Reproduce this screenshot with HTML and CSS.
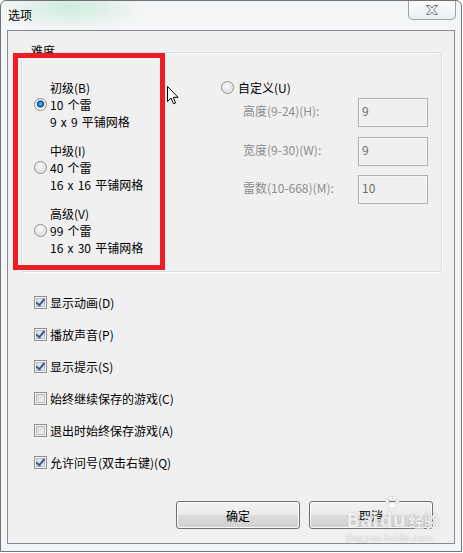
FILE: index.html
```html
<!DOCTYPE html>
<html lang="zh-CN">

<head>
    <meta charset="UTF-8">
    <meta name="viewport" content="width=device-width, initial-scale=1.0">
    <title>选项</title>
    <link rel="stylesheet" href="styles.css">
</head>

<body>
    <div class="window">
        <div class="titlebar">
            <span class="title">选项</span>
            <button class="close" type="button">
                <svg width="12" height="10" viewBox="0 0 12 10">
                    <path d="M0.5,0.5 H3.8 L6,3.2 L8.2,0.5 H11.5 L7.7,5 L11.5,9.5 H8.2 L6,6.8 L3.8,9.5 H0.5 L4.3,5 Z" fill="#f7f8f9" stroke="#72777d" stroke-width="1" stroke-linejoin="round" />
                </svg>
            </button>
        </div>

        <div class="client">
            <div class="group">
                <span class="legend">难度</span>
                <div class="mark"></div>

                <div class="levels">
                    <label class="level">
                        <span class="radio checked"></span>
                        <span>初级(B)<br>10 个雷<br>9 x 9 平铺网格</span>
                    </label>
                    <label class="level">
                        <span class="radio"></span>
                        <span>中级(I)<br>40 个雷<br>16 x 16 平铺网格</span>
                    </label>
                    <label class="level">
                        <span class="radio"></span>
                        <span>高级(V)<br>99 个雷<br>16 x 30 平铺网格</span>
                    </label>
                </div>

                <div class="custom">
                    <label class="custom-head"><span class="radio"></span>自定义(U)</label>
                    <div class="fields">
                        <span class="field-label">高度(9-24)(H):</span>
                        <span class="field">9</span>
                        <span class="field-label">宽度(9-30)(W):</span>
                        <span class="field">9</span>
                        <span class="field-label">雷数(10-668)(M):</span>
                        <span class="field">10</span>
                    </div>
                </div>
            </div>

            <ul class="options">
                <li class="option"><span class="check checked"></span>显示动画(D)</li>
                <li class="option"><span class="check checked"></span>播放声音(P)</li>
                <li class="option"><span class="check checked"></span>显示提示(S)</li>
                <li class="option"><span class="check"></span>始终继续保存的游戏(C)</li>
                <li class="option"><span class="check"></span>退出时始终保存游戏(A)</li>
                <li class="option"><span class="check checked"></span>允许问号(双击右键)(Q)</li>
            </ul>

            <div class="buttons">
                <button class="btn" type="button">确定</button>
                <button class="btn" type="button">取消</button>
            </div>
        </div>
    </div>

    <!-- mouse pointer left in the screenshot -->
    <svg class="cursor" width="13" height="19" viewBox="0 0 13 19">
        <path d="M0.5,0.5 V15.5 L4,12 L6.5,17.8 L8.6,16.9 L6.2,11.3 H11 Z" fill="#fff" stroke="#000" stroke-width="1" stroke-linejoin="round" />
    </svg>

    <div class="watermark">
        <div class="wm-logo">
            <span>Bai</span>
            <span class="wm-du">
                <svg width="16" height="13" viewBox="0 0 16 13">
                    <circle cx="3" cy="5" r="2" />
                    <circle cx="6.5" cy="2" r="2" />
                    <circle cx="10.5" cy="2" r="2" />
                    <circle cx="13.5" cy="5" r="2" />
                    <ellipse cx="8.2" cy="9.5" rx="4" ry="3" />
                </svg>
                du
            </span>
            <span class="wm-cn">经验</span>
        </div>
        <div class="wm-url">jingyan.baidu.com</div>
    </div>
</body>

</html>
```

FILE: styles.css
```css
body {
    margin: 0;
    background: #fff;
    font-family: "Noto Sans CJK SC", "Microsoft YaHei", sans-serif;
    font-size: 12px;
    color: #000;
}

.window {
    position: relative;
    width: 462px;
    height: 552px;
    box-sizing: border-box;
    border: 1px solid #6f7378;
    border-radius: 6px 6px 0 0;
    background:
        radial-gradient(ellipse 70px 22px at 70px 6px, rgba(160, 225, 190, 0.45), transparent),
        #f3f5f6;
}

.titlebar {
    display: flex;
    justify-content: space-between;
    align-items: flex-start;
    height: 29px;
}

.title {
    padding: 5px 0 0 7px;
    line-height: 17px;
}

.close {
    display: flex;
    align-items: center;
    justify-content: center;
    width: 48px;
    height: 19px;
    margin-right: 5px;
    padding: 0;
    border: 1px solid #9ca2a8;
    border-top: none;
    border-radius: 0 0 5px 5px;
    background: linear-gradient(#fcfcfc, #eceef0);
}

.client {
    display: flex;
    flex-direction: column;
    width: 448px;
    height: 514px;
    margin: 0 6px;
    box-sizing: border-box;
    border: 1px solid #878b91;
    background: #f0f0f0;
}

/* 难度 group box */
.group {
    position: relative;
    display: grid;
    grid-template-columns: 187px 1fr;
    align-items: start;
    width: 421px;
    height: 220px;
    margin: 21px 0 0 13px;
    padding: 26px 0 0 12px;
    box-sizing: border-box;
    border: 1px solid #d5dfe5;
    border-radius: 3px;
    box-shadow: 1px 1px 0 #fff, inset 1px 1px 0 #fff;
}

.legend {
    position: absolute;
    left: 8px;
    top: -9px;
    padding: 0 1px;
    line-height: 14px;
    background: #f0f0f0;
}

.mark {
    position: absolute;
    left: -9px;
    top: 0;
    width: 152px;
    height: 217px;
    box-sizing: border-box;
    border: 5px solid #ee1c24;
}

.levels {
    display: flex;
    flex-direction: column;
    gap: 12px;
}

.level {
    display: grid;
    grid-template-columns: 13px auto;
    column-gap: 3px;
    line-height: 17px;
    word-spacing: 1.5px;
}

.level .radio {
    margin-top: 19px;
}

.radio {
    display: inline-block;
    flex: none;
    width: 13px;
    height: 13px;
    box-sizing: border-box;
    border: 1px solid #8c8c8c;
    border-radius: 50%;
    background: radial-gradient(circle at 45% 40%, #fdfdfd 0, #e6e6e6 45%, #c9c9c9 100%);
    box-shadow: inset 0 0 0 1px rgba(255, 255, 255, 0.6);
}

.radio.checked {
    background: radial-gradient(circle at 50% 45%, #7fd3fb 0, #2489d6 1.6px, #0d4d8c 3.2px, #d2d6da 3.8px, #f6f6f6 5.5px);
}

.custom {
    display: flex;
    flex-direction: column;
    gap: 2px;
}

.custom-head {
    display: flex;
    align-items: center;
    gap: 4px;
    line-height: 17px;
}

.fields {
    display: grid;
    grid-template-columns: 115px 70px;
    row-gap: 9.5px;
    padding-left: 22px;
    color: #8d8d8d;
}

.field-label {
    padding-top: 4px;
    line-height: 17px;
}

.field {
    height: 29px;
    padding: 3px 0 0 3px;
    box-sizing: border-box;
    border: 1px solid #aeb0b4;
    line-height: 17px;
    color: #6d6d6d;
    box-shadow: inset 0 0 0 1px #f7f7f7;
}

/* checkboxes */
.options {
    display: flex;
    flex-direction: column;
    gap: 15px;
    margin: 22px 0 0;
    padding: 0 0 0 26px;
    list-style: none;
}

.option {
    display: flex;
    align-items: center;
    gap: 3px;
    line-height: 17px;
}

.check {
    position: relative;
    flex: none;
    width: 13px;
    height: 13px;
    box-sizing: border-box;
    border: 1px solid #8e8f8f;
    background: linear-gradient(135deg, #d3d6da, #f7f7f7);
    box-shadow: inset 0 0 0 1px #f4f4f4, inset 0 0 0 2px #b9bdc3;
}

.check.checked::after {
    content: "";
    position: absolute;
    left: 3px;
    top: 0;
    width: 3px;
    height: 7px;
    border: solid #3e5597;
    border-width: 0 2px 2px 0;
    transform: rotate(40deg);
}

.buttons {
    display: flex;
    justify-content: flex-end;
    gap: 9px;
    margin-top: auto;
    padding: 0 21px 14px 0;
}

.btn {
    width: 124px;
    height: 28px;
    padding: 0;
    border: 1px solid #707070;
    border-radius: 3px;
    background: linear-gradient(#f2f2f2 0, #ebebeb 50%, #dddddd 50%, #cfcfcf 100%);
    box-shadow: inset 0 0 0 1px #fbfbfb;
    font: inherit;
    color: #000;
}

.cursor {
    position: absolute;
    left: 167px;
    top: 86px;
}

.watermark {
    position: absolute;
    left: 346px;
    top: 496px;
    color: rgba(255, 255, 255, 0.85);
    text-shadow: 0 0 1px rgba(0, 0, 0, 0.35);
}

.wm-logo {
    display: flex;
    align-items: flex-end;
    font-family: "DejaVu Sans", sans-serif;
    font-weight: bold;
    font-size: 19px;
    line-height: 22px;
    letter-spacing: -0.5px;
}

.wm-du {
    display: flex;
    flex-direction: column;
    align-items: center;
    margin-left: 1px;
}

.wm-du svg {
    fill: rgba(255, 255, 255, 0.9);
    stroke: rgba(0, 0, 0, 0.2);
    stroke-width: 0.6;
}

.wm-cn {
    margin-left: 3px;
    font-family: "Noto Sans CJK SC", sans-serif;
    font-size: 16px;
}

.wm-url {
    font-family: "Liberation Serif", serif;
    font-size: 11px;
    line-height: 12px;
    letter-spacing: 0.3px;
}
```
